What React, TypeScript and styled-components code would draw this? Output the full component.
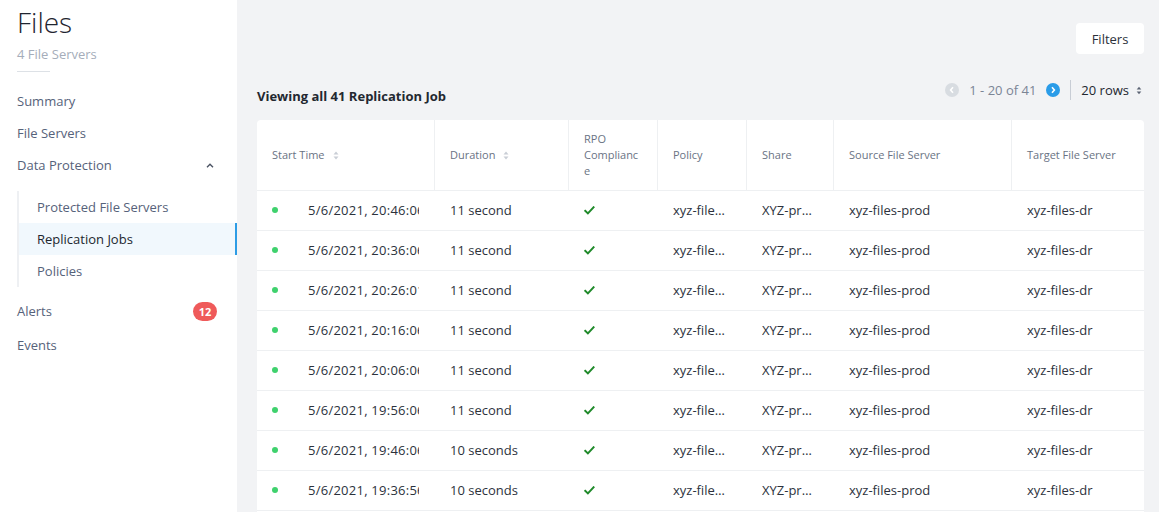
import React from "react";
import styled, { createGlobalStyle } from "styled-components";

const GlobalStyle = createGlobalStyle`
  html, body { margin: 0; padding: 0; }
  body {
    font-family: "Open Sans", Lato, "Liberation Sans", sans-serif;
    -webkit-font-smoothing: antialiased;
    background: #f2f3f5;
  }
  * { box-sizing: border-box; }
`;

const Shell = styled.div`
  display: flex;
  min-height: 100vh;
`;

const Sidebar = styled.aside`
  width: 237px;
  flex-shrink: 0;
  background: #ffffff;
  padding: 3px 20px 0 0;
`;

const Brand = styled.div`
  padding-left: 17px;
`;

const Title = styled.h1`
  margin: 0;
  font-size: 28px;
  line-height: 38px;
  font-weight: 300;
  color: #1f2530;
`;

const Subtitle = styled.div`
  font-size: 13px;
  line-height: 20px;
  color: #a5adba;
  margin-top: 3px;
`;

const Rule = styled.div`
  width: 33px;
  height: 1px;
  background: #dde1e6;
  margin-top: 7px;
`;

const Nav = styled.nav`
  margin-top: 13px;
  display: flex;
  flex-direction: column;
`;

const NavItem = styled.div<{ $tall?: boolean }>`
  display: flex;
  align-items: center;
  justify-content: space-between;
  height: ${(p) => (p.$tall ? 34 : 32)}px;
  padding-left: 17px;
  font-size: 13px;
  color: #56627a;
`;

const SubGroup = styled.div`
  margin: 10px -20px 7px 17px;
  border-left: 2px solid #eef0f3;
  display: flex;
  flex-direction: column;
`;

const SubItem = styled.div<{ $active?: boolean }>`
  height: 32px;
  display: flex;
  align-items: center;
  padding-left: 18px;
  font-size: 13px;
  color: ${(p) => (p.$active ? "#22272f" : "#56627a")};
  background: ${(p) => (p.$active ? "#f1f8fd" : "transparent")};
  border-right: 2px solid ${(p) => (p.$active ? "#2d9ce5" : "transparent")};
`;

const Badge = styled.span`
  min-width: 24px;
  height: 19px;
  border-radius: 10px;
  background: #ef5a5a;
  color: #fff;
  font-size: 11px;
  font-weight: 700;
  display: inline-flex;
  align-items: center;
  justify-content: center;
`;

const Chevron = styled.svg`
  margin-right: 3px;
`;

const Main = styled.main`
  flex: 1;
  background: #f2f3f5;
  padding: 23px 15px 0 20px;
  min-width: 0;
`;

const Toolbar = styled.div`
  display: flex;
  justify-content: flex-end;
`;

const FilterButton = styled.button`
  height: 31px;
  width: 68px;
  border: none;
  border-radius: 4px;
  background: #ffffff;
  font-family: inherit;
  font-size: 13px;
  color: #2b313b;
  cursor: pointer;
  padding: 0;
`;

const MetaRow = styled.div`
  margin-top: 24px;
  height: 26px;
  display: flex;
  justify-content: space-between;
  align-items: flex-start;
`;

const Heading = styled.div`
  align-self: flex-end;
  font-size: 13px;
  line-height: 16px;
  font-weight: 700;
  color: #232830;
`;

const Pager = styled.div`
  display: flex;
  align-items: center;
  height: 24px;
  font-size: 13px;
`;

const PageBtn = styled.span<{ $on?: boolean }>`
  width: 14px;
  height: 14px;
  border-radius: 50%;
  background: ${(p) => (p.$on ? "#2a9ce8" : "#d8dce1")};
  display: inline-flex;
  align-items: center;
  justify-content: center;
`;

const PageText = styled.span`
  color: #7b8595;
  margin: 0 10px;
`;

const VDivider = styled.span`
  width: 1px;
  height: 20px;
  background: #c8cdd5;
  margin: 0 10px;
`;

const RowsSelect = styled.span`
  display: inline-flex;
  align-items: center;
  gap: 7px;
  color: #22272f;
  margin-right: 2px;
`;

const Card = styled.div`
  margin-top: 16px;
  background: #ffffff;
  border-radius: 4px;
  overflow: hidden;
`;

const COLS = "178px 134px 89px 89px 87px 178px 1fr";

const HeadRow = styled.div`
  display: grid;
  grid-template-columns: ${COLS};
  height: 70px;
`;

const HeadCell = styled.div`
  display: flex;
  align-items: center;
  padding: 0 14px 0 15px;
  font-size: 11px;
  line-height: 16px;
  color: #6a7384;
  border-right: 1px solid #eef0f2;
  overflow-wrap: anywhere;
  &:last-child { border-right: none; }
`;

const SortIcon = styled.svg`
  margin-left: 8px;
  flex-shrink: 0;
`;

const BodyRow = styled.div`
  display: grid;
  grid-template-columns: ${COLS};
  height: 40px;
  border-top: 1px solid #eef0f2;
`;

const Cell = styled.div`
  display: flex;
  align-items: center;
  padding: 0 14px 1px 15px;
  font-size: 13px;
  color: #2c323c;
  min-width: 0;
`;

const TimeCell = styled(Cell)`
  padding-right: 16px;
`;

const Ellipsis = styled.span`
  white-space: nowrap;
  overflow: hidden;
  text-overflow: ellipsis;
  min-width: 0;
  max-width: 55px;
`;

const Dot = styled.span`
  width: 6px;
  height: 6px;
  border-radius: 50%;
  background: #3fd16d;
  flex-shrink: 0;
  margin-right: 30px;
`;

const Clip = styled.span`
  white-space: nowrap;
  overflow: hidden;
  text-overflow: clip;
  min-width: 0;
  letter-spacing: 0.25px;
`;

const Sort = () => (
  <SortIcon width="6" height="9" viewBox="0 0 6 9">
    <path d="M3 0.5 L5.5 3.5 H0.5 Z" fill="#c9ced6" />
    <path d="M3 8.5 L5.5 5.5 H0.5 Z" fill="#c9ced6" />
  </SortIcon>
);

const Check = () => (
  <svg width="11" height="9" viewBox="0 0 11 9">
    <path d="M1.2 4.8 L3.9 7.4 L9.6 1.2" fill="none" stroke="#1f8a2a" strokeWidth="1.9" strokeLinecap="square" />
  </svg>
);

const times = [
  "20:46:06", "20:36:06", "20:26:01", "20:16:06", "20:06:06", "19:56:06", "19:46:06", "19:36:56",
  "19:26:06", "19:16:06", "19:06:06", "18:56:06", "18:46:06", "18:36:06", "18:26:06", "18:16:06",
  "18:06:06", "17:56:06", "17:46:06", "17:36:06",
];
const durations = [
  "11 second", "11 second", "11 second", "11 second", "11 second", "11 second", "10 seconds", "10 seconds",
  "11 second", "11 second", "10 seconds", "11 second", "11 second", "10 seconds", "11 second", "11 second",
  "10 seconds", "11 second", "11 second", "11 second",
];

const rows = times.map((t, i) => ({ time: `5/6/2021, ${t}`, duration: durations[i] }));

export default function App() {
  return (
    <>
      <GlobalStyle />
      <Shell>
        <Sidebar>
          <Brand>
            <Title>Files</Title>
            <Subtitle>4 File Servers</Subtitle>
            <Rule />
          </Brand>
          <Nav>
            <NavItem>Summary</NavItem>
            <NavItem>File Servers</NavItem>
            <NavItem>
              Data Protection
              <Chevron width="8" height="5" viewBox="0 0 8 5">
                <path d="M1 4.2 L4 1.2 L7 4.2" fill="none" stroke="#4a5262" strokeWidth="1.4" />
              </Chevron>
            </NavItem>
            <SubGroup>
              <SubItem>Protected File Servers</SubItem>
              <SubItem $active>Replication Jobs</SubItem>
              <SubItem>Policies</SubItem>
            </SubGroup>
            <NavItem $tall>
              Alerts
              <Badge>12</Badge>
            </NavItem>
            <NavItem $tall>Events</NavItem>
          </Nav>
        </Sidebar>
        <Main>
          <Toolbar>
            <FilterButton>Filters</FilterButton>
          </Toolbar>
          <MetaRow>
            <Heading>Viewing all 41 Replication Job</Heading>
            <Pager>
              <PageBtn>
                <svg width="6" height="8" viewBox="0 0 6 8">
                  <path d="M4 1.2 L1.6 4 L4 6.8" fill="none" stroke="#fff" strokeWidth="1.6" />
                </svg>
              </PageBtn>
              <PageText>1 - 20 of 41</PageText>
              <PageBtn $on>
                <svg width="6" height="8" viewBox="0 0 6 8">
                  <path d="M2 1.2 L4.4 4 L2 6.8" fill="none" stroke="#fff" strokeWidth="1.6" />
                </svg>
              </PageBtn>
              <VDivider />
              <RowsSelect>
                20 rows
                <svg width="6" height="9" viewBox="0 0 6 9">
                  <path d="M3 0.8 L5.3 3.4 H0.7 Z" fill="#5b6373" />
                  <path d="M3 8.2 L5.3 5.6 H0.7 Z" fill="#5b6373" />
                </svg>
              </RowsSelect>
            </Pager>
          </MetaRow>
          <Card>
            <HeadRow>
              <HeadCell>Start Time<Sort /></HeadCell>
              <HeadCell>Duration<Sort /></HeadCell>
              <HeadCell>RPO Compliance</HeadCell>
              <HeadCell>Policy</HeadCell>
              <HeadCell>Share</HeadCell>
              <HeadCell>Source File Server</HeadCell>
              <HeadCell>Target File Server</HeadCell>
            </HeadRow>
            {rows.map((r) => (
              <BodyRow key={r.time}>
                <TimeCell>
                  <Dot />
                  <Clip>{r.time}</Clip>
                </TimeCell>
                <Cell>{r.duration}</Cell>
                <Cell><Check /></Cell>
                <Cell><Ellipsis>xyz-files-policy</Ellipsis></Cell>
                <Cell><Ellipsis>XYZ-projects</Ellipsis></Cell>
                <Cell>xyz-files-prod</Cell>
                <Cell>xyz-files-dr</Cell>
              </BodyRow>
            ))}
          </Card>
        </Main>
      </Shell>
    </>
  );
}
